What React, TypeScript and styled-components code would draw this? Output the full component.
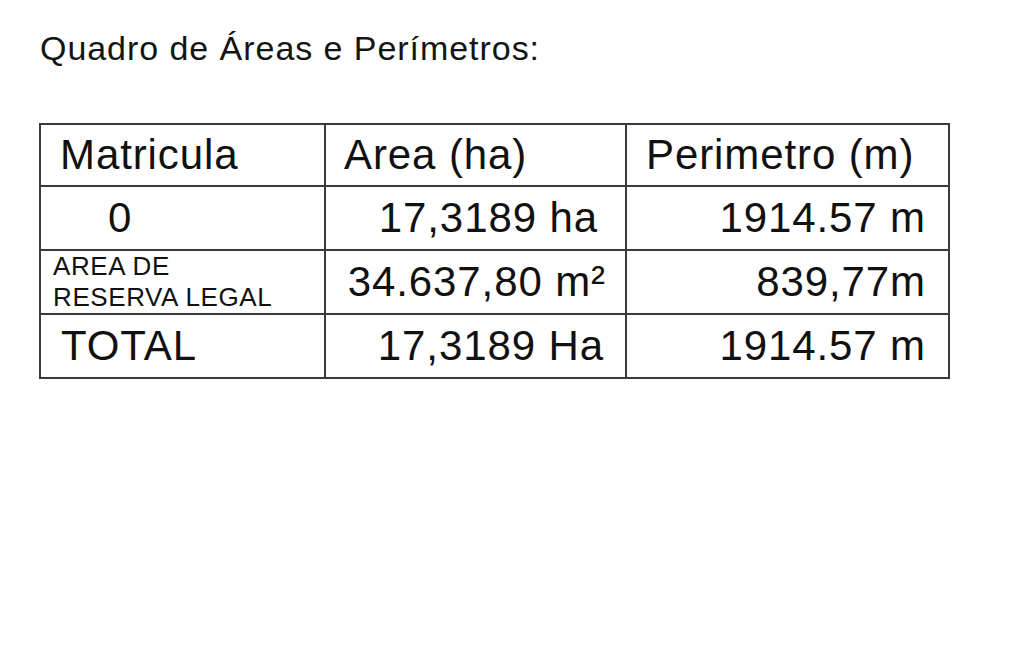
import React from "react";
import styled, { createGlobalStyle } from "styled-components";

const Global = createGlobalStyle`
  html, body { margin: 0; padding: 0; background: #ffffff; }
  body { font-family: "Liberation Sans", Arial, sans-serif; color: #141414; }
`;

const Page = styled.div`
  width: 1010px;
  height: 650px;
  box-sizing: border-box;
  padding: 29px 0 0 39px;
  background: #fff;
`;

const Title = styled.h1`
  margin: 0 0 0 1px;
  font-weight: 400;
  font-size: 34px;
  line-height: 39px;
  letter-spacing: 0.95px;
  color: #141414;
`;

const Grid = styled.div`
  margin-top: 55px;
  display: grid;
  grid-template-columns: 285px 301px 323px;
  grid-template-rows: 62px 64px 64px 64px;
  width: 911px;
  box-sizing: border-box;
  border-top: 2px solid #3a3a3a;
  border-left: 2px solid #3a3a3a;
`;

type CellProps = { $align?: "left" | "right"; $pl?: number; $pr?: number };

const Cell = styled.div<CellProps>`
  box-sizing: border-box;
  border-right: 2px solid #3a3a3a;
  border-bottom: 2px solid #3a3a3a;
  display: flex;
  align-items: center;
  justify-content: ${(p) => (p.$align === "right" ? "flex-end" : "flex-start")};
  padding-left: ${(p) => p.$pl ?? 0}px;
  padding-right: ${(p) => p.$pr ?? 0}px;
  font-size: 42px;
  line-height: 48px;
  letter-spacing: 0.9px;
  white-space: nowrap;
  color: #111;
`;

const SmallCell = styled(Cell)`
  flex-direction: column;
  align-items: flex-start;
  justify-content: flex-start;
  font-size: 26px;
  line-height: 31px;
  letter-spacing: 0.6px;
`;

export default function App() {
  return (
    <>
      <Global />
      <Page>
        <Title>Quadro de Áreas e Perímetros:</Title>
        <Grid>
          <Cell $pl={19}>Matricula</Cell>
          <Cell $pl={18}>Area (ha)</Cell>
          <Cell $pl={19}>Perimetro (m)</Cell>

          <Cell $pl={67}>0</Cell>
          <Cell $align="right" $pr={27}>17,3189 ha</Cell>
          <Cell $align="right" $pr={22}>1914.57 m</Cell>

          <SmallCell $pl={12}>
            <span>AREA DE</span>
            <span>RESERVA LEGAL</span>
          </SmallCell>
          <Cell $align="right" $pr={19}>34.637,80 m²</Cell>
          <Cell $align="right" $pr={22}>839,77m</Cell>

          <Cell $pl={20}>TOTAL</Cell>
          <Cell $align="right" $pr={21}>17,3189 Ha</Cell>
          <Cell $align="right" $pr={22}>1914.57 m</Cell>
        </Grid>
      </Page>
    </>
  );
}
